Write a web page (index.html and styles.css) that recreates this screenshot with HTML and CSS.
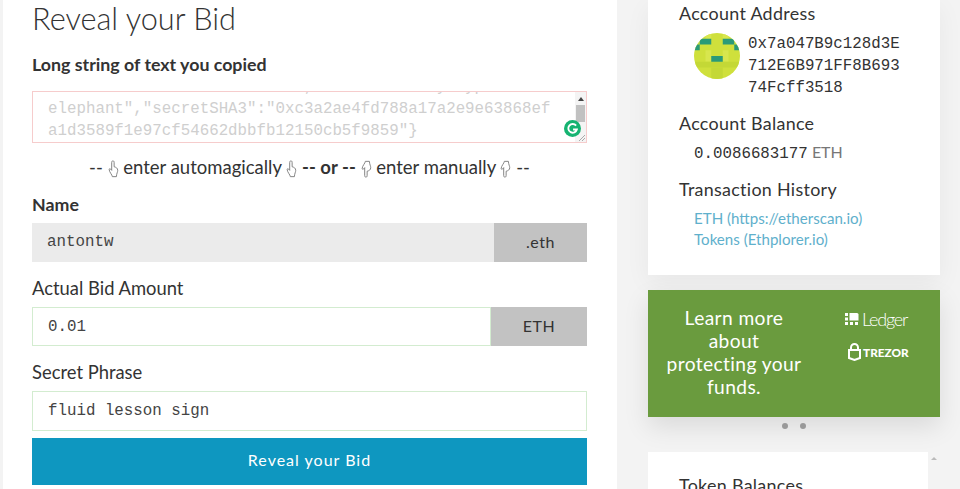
FILE: index.html
```html
<!DOCTYPE html>
<html lang="en">
<head>
    <meta charset="UTF-8">
    <title>Reveal your Bid</title>
    <link rel="stylesheet" href="styles.css">
</head>
<body>
<svg class="defs" width="0" height="0">
    <symbol id="hand" viewBox="0 0 12 20">
        <path d="M5.500 1c1 0 1.200 1 1.200 2v4.500c2 .5 4 1.500 4 4 0 2-1.200 3-1.500 7h-4.500c0-2-3.500-5-3.500-8 0-1 1-1.200 1.600-.4l1.200 1.400V3c0-1 .4-2 1-2z"/>
    </symbol>
</svg>
<div class="page">
    <!-- left column: the reveal form -->
    <main class="form-card">
        <h1>Reveal your Bid</h1>
        <label class="label-strong label-first">Long string of text you copied</label>
        <div class="paste-box">
            <div class="paste-text">"value":"10000000000000000","secret":"baby type-
elephant","secretSHA3":"0xc3a2ae4fd788a17a2e9e63868ef
a1d3589f1e97cf54662dbbfb12150cb5f9859"}</div>
            <div class="scrollbar">
                <span class="arrow-up"></span>
                <span class="thumb"></span>
            </div>
            <svg class="grip" viewBox="0 0 10 10"><path d="M9 3 3 9M9 6 6 9" fill="none" stroke="#aaa"/></svg>
            <svg class="grammarly" viewBox="0 0 18 18">
                <circle cx="9" cy="9" r="9" fill="#15b371"/>
                <path d="M12.800 6A4.600 4.600 0 1 0 13.600 10H9.600" fill="none" stroke="#fff" stroke-width="2"/>
            </svg>
        </div>
        <p class="divider">
            -- <svg class="hand"><use href="#hand"/></svg>
            enter automagically <svg class="hand"><use href="#hand"/></svg>
            <strong>-- or --</strong> <svg class="hand hand-down"><use href="#hand"/></svg>
            enter manually <svg class="hand hand-down"><use href="#hand"/></svg> --
        </p>
        <label class="label-strong label-name">Name</label>
        <div class="field">
            <div class="value value-readonly">antontw</div>
            <div class="addon addon-eth">.eth</div>
        </div>
        <label class="label-plain">Actual Bid Amount</label>
        <div class="field">
            <div class="value value-valid">0.01</div>
            <div class="addon addon-unit">ETH</div>
        </div>
        <label class="label-plain">Secret Phrase</label>
        <div class="field field-tall">
            <div class="value value-valid">fluid lesson sign</div>
        </div>
        <button class="reveal-btn">Reveal your Bid</button>
    </main>

    <!-- right column: account info and promo -->
    <aside class="sidebar">
        <section class="account-card">
            <h5>Account Address</h5>
            <div class="address-row">
                <svg class="avatar" viewBox="0 0 8 8">
                    <rect width="8" height="8" fill="#cfe03c"/>
                    <rect x="2" y="0" width="1" height="1" fill="#d8e64e"/>
                    <rect x="5" y="0" width="1" height="1" fill="#d8e64e"/>
                    <rect x="2" y="3" width="1" height="2" fill="#d8e64e"/>
                    <rect x="5" y="3" width="1" height="2" fill="#d8e64e"/>
                    <rect x="0" y="5" width="8" height="1" fill="#c4d836"/>
                    <rect x="3" y="6" width="2" height="2" fill="#c4d836"/>
                    <rect x="1" y="1" width="2" height="1" fill="#2a9a78"/>
                    <rect x="5" y="1" width="2" height="1" fill="#2a9a78"/>
                    <rect x="0" y="2" width="1" height="1" fill="#2a9a78"/>
                    <rect x="7" y="2" width="1" height="1" fill="#2a9a78"/>
                    <rect x="3" y="4" width="2" height="1" fill="#2a9a78"/>
                </svg>
                <div class="address">0x7a047B9c128d3E712E6B971FF8B69374Fcff3518</div>
            </div>
            <h5>Account Balance</h5>
            <div class="balance"><span class="mono">0.0086683177</span> <span class="unit">ETH</span></div>
            <h5>Transaction History</h5>
            <ul class="links">
                <li><a href="#">ETH (https://etherscan.io)</a></li>
                <li><a href="#">Tokens (Ethplorer.io)</a></li>
            </ul>
        </section>

        <section class="promo">
            <div class="promo-text">Learn more about protecting your funds.</div>
            <div class="promo-logos">
                <div class="logo-ledger">
                    <svg viewBox="0 0 14 14" width="14" height="14" fill="#fff">
                        <rect x="0" y="1" width="3" height="3"/><rect x="0" y="5.500" width="3" height="3"/>
                        <path d="M4.500 1H12a1.500 1.500 0 0 1 1.500 1.500v6H4.500z"/>
                        <rect x="0" y="10" width="3" height="3"/><rect x="5" y="10" width="3" height="3"/><rect x="10" y="10" width="3" height="3"/>
                    </svg>
                    <span>Ledger</span>
                </div>
                <div class="logo-trezor">
                    <svg viewBox="0 0 13 18" width="13" height="18" fill="none" stroke="#fff" stroke-width="2">
                        <path d="M3 7V4.500a3.500 3.500 0 0 1 7 0V7"/>
                        <path d="M1 7h11v8l-5.500 2L1 15z"/>
                    </svg>
                    <span>TREZOR</span>
                </div>
            </div>
        </section>
        <div class="dots"><span></span><span></span></div>

        <div class="token-row">
            <section class="token-card"><h5>Token Balances</h5></section>
            <span class="token-arrow"></span>
        </div>
    </aside>
</div>
</body>
</html>
```

FILE: styles.css
```css
html, body {
    margin: 0;
    height: 489px;
    overflow: hidden;
}
body {
    font-family: Lato, "Liberation Sans", sans-serif;
    background-color: #f3f3f3;
    color: #333;
}
.defs {
    position: absolute;
}
.page {
    display: flex;
    height: 489px;
    overflow: hidden;
    padding-left: 3px;
}

/* form */
.form-card {
    width: 614px;
    height: 489px;
    padding: 0 30px 0 29px;
    box-sizing: border-box;
    background: white;
    flex-shrink: 0;
}
h1 {
    font-size: 30.7px;
    font-weight: 300;
    line-height: 40px;
    margin: -1px 0 0;
}
label {
    display: block;
    font-size: 18.4px;
    line-height: 22px;
}
.label-strong {
    font-size: 17.8px;
    font-weight: 700;
}
.label-first {
    margin-top: 14px;
}
.label-name {
    margin-top: 14px;
    margin-bottom: 8px;
}
.label-plain {
    margin-top: 15px;
    margin-bottom: 8px;
}
.paste-box {
    position: relative;
    height: 52px;
    margin-top: 16px;
    border: 1px solid #f6cccc;
    box-sizing: border-box;
    display: flex;
    flex-direction: column;
    justify-content: flex-end;
    overflow: hidden;
}
.paste-text {
    font-family: "Liberation Mono", monospace;
    font-size: 15.8px;
    line-height: 22px;
    color: #cfcfcf;
    padding-left: 15px;
    white-space: pre;
}
.scrollbar {
    position: absolute;
    top: 0;
    right: 0;
    bottom: 0;
    width: 11px;
    background: #f4f4f4;
}
.arrow-up {
    display: block;
    width: 0;
    margin: 5px auto 0;
    border: 3px solid transparent;
    border-top: 0;
    border-bottom: 4px solid #444;
}
.thumb {
    display: block;
    margin: 4px 1px 0;
    height: 17px;
    background: #c1c1c1;
}
.grip {
    position: absolute;
    right: 0;
    bottom: 0;
    width: 10px;
    height: 10px;
}
.grammarly {
    position: absolute;
    right: 5px;
    bottom: 5px;
    width: 17px;
    height: 17px;
}
.divider {
    margin: 12px 0 0;
    font-size: 18.5px;
    line-height: 24px;
    text-align: center;
}
.hand {
    width: 11px;
    height: 18px;
    vertical-align: -4px;
    fill: none;
    stroke: #777;
    stroke-width: 1;
}
.hand-down {
    transform: scaleY(-1);
}
.field {
    display: flex;
    height: 39px;
}
.field-tall {
    height: 40px;
}
.value {
    flex: 1;
    font-family: "Liberation Mono", monospace;
    font-size: 15.8px;
    line-height: 38px;
    padding-left: 15px;
    color: #444;
}
.value-readonly {
    background: #ebebeb;
}
.value-valid {
    border: 1px solid #d3ecd0;
}
.field-tall .value {
    line-height: 39px;
}
.addon {
    background: #c2c2c2;
    text-align: center;
    font-size: 16px;
    line-height: 37px;
    letter-spacing: 0.5px;
}
.addon-eth {
    width: 93px;
}
.addon-unit {
    width: 96px;
}
.reveal-btn {
    display: block;
    width: 100%;
    height: 47px;
    margin-top: 7px;
    padding-bottom: 6px;
    border: none;
    background-color: #0e97c0;
    color: white;
    font-family: Lato, sans-serif;
    font-size: 16px;
    letter-spacing: 1px;
}

/* sidebar */
.sidebar {
    width: 292px;
    margin-left: 31px;
    flex-shrink: 0;
}
.account-card {
    background: white;
    height: 275px;
    padding: 2px 31px 0;
    box-sizing: border-box;
    box-shadow: 0 8px 24px rgba(0, 0, 0, 0.05);
}
h5 {
    font-size: 17.9px;
    font-weight: 400;
    line-height: 22px;
    margin: 0;
    letter-spacing: 0.3px;
}
.address-row {
    display: flex;
    gap: 8px;
    margin: 9px 0 13px 15px;
}
.avatar {
    width: 46px;
    height: 46px;
    border-radius: 50%;
    flex-shrink: 0;
}
.address {
    width: 155px;
    font-family: "Liberation Mono", monospace;
    font-size: 15.8px;
    line-height: 22px;
    word-break: break-all;
}
.balance {
    margin: 7px 0 13px 15px;
    line-height: 22px;
}
.mono {
    font-family: "Liberation Mono", monospace;
    font-size: 15.8px;
}
.unit {
    color: #777;
    font-size: 16px;
}
.links {
    list-style: none;
    margin: 8px 0 0 15px;
    padding: 0;
    font-size: 15.1px;
    line-height: 21px;
}
.links a {
    color: #5fb0cc;
    text-decoration: none;
}
.promo {
    display: flex;
    height: 127px;
    margin-top: 15px;
    background: #6a9b3e;
    color: white;
    box-shadow: 0 10px 24px rgba(0, 0, 0, 0.1);
}
.promo-text {
    width: 140px;
    flex-shrink: 0;
    margin-left: 16px;
    padding-top: 16px;
    font-size: 19.2px;
    line-height: 23px;
    letter-spacing: 0.4px;
    text-align: center;
}
.promo-logos {
    margin-left: 41px;
    padding-top: 18px;
}
.logo-ledger {
    display: flex;
    align-items: center;
    gap: 3px;
    font-size: 18px;
    font-weight: 300;
    letter-spacing: -1.2px;
}
.logo-trezor {
    display: flex;
    align-items: center;
    gap: 2px;
    margin: 13px 0 0 3px;
    font-size: 11.8px;
    font-weight: 900;
}
.dots {
    display: flex;
    justify-content: center;
    gap: 12px;
    margin-top: 6px;
    height: 6px;
}
.dots span {
    width: 6px;
    height: 6px;
    border-radius: 50%;
    background: #999;
}
.token-row {
    display: flex;
    margin-top: 23px;
}
.token-card {
    width: 280px;
    height: 100px;
    padding: 22px 31px 0;
    box-sizing: border-box;
    background: white;
}
.token-arrow {
    width: 0;
    height: 0;
    margin: 5px 0 0 3px;
    border: 3px solid transparent;
    border-top: 0;
    border-bottom: 3px solid #bbb;
}
```
